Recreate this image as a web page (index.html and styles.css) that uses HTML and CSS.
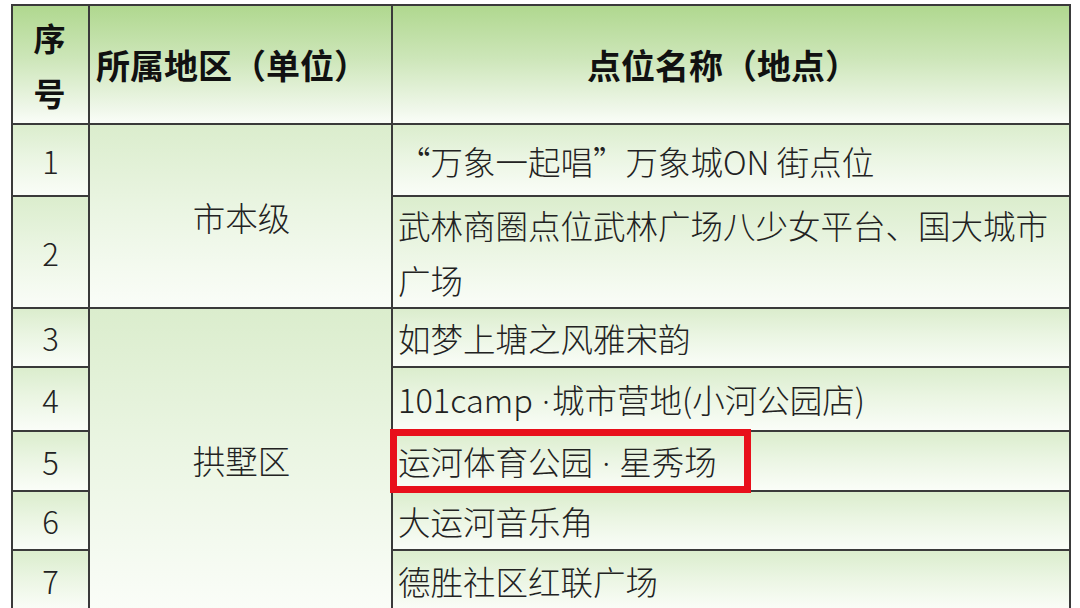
FILE: index.html
```html
<!DOCTYPE html>
<html lang="zh-CN">
<head>
<meta charset="utf-8">
<title>点位名称</title>
<link rel="stylesheet" href="styles.css">
</head>
<body>
<div class="page">
  <table class="sheet">
    <colgroup>
      <col class="c-no">
      <col class="c-area">
      <col class="c-name">
    </colgroup>
    <thead>
      <tr class="r-head">
        <th class="h-no">序号</th>
        <th class="h-area">所属地区（单位）</th>
        <th class="h-name">点位名称（地点）</th>
      </tr>
    </thead>
    <tbody>
      <tr class="r1">
        <td class="no">1</td>
        <td class="area" rowspan="2">市本级</td>
        <td class="name">“万象一起唱”万象城ON 街点位</td>
      </tr>
      <tr class="r2">
        <td class="no">2</td>
        <td class="name">武林商圈点位武林广场八少女平台、国大城市广场</td>
      </tr>
      <tr class="r3">
        <td class="no">3</td>
        <td class="area" rowspan="5">拱墅区</td>
        <td class="name">如梦上塘之风雅宋韵</td>
      </tr>
      <tr class="r4">
        <td class="no">4</td>
        <td class="name">101camp <span class="dot">·</span>城市营地(小河公园店)</td>
      </tr>
      <tr class="r5">
        <td class="no">5</td>
        <td class="name marked">运河体育公园 <span class="dot">·</span> 星秀场<span class="highlight"></span></td>
      </tr>
      <tr class="r6">
        <td class="no">6</td>
        <td class="name">大运河音乐角</td>
      </tr>
      <tr class="r7">
        <td class="no">7</td>
        <td class="name">德胜社区红联广场</td>
      </tr>
    </tbody>
  </table>
</div>
</body>
</html>
```

FILE: styles.css
```css
html, body {
  margin: 0;
  padding: 0;
  background: #ffffff;
}

.page {
  padding: 4px 11px 0 11px;
  width: 1080px;
  height: 608px;
  box-sizing: border-box;
  overflow: hidden;
}

.sheet {
  border-collapse: collapse;
  table-layout: fixed;
  width: 1058px;
  font-family: "Noto Sans CJK SC", "Noto Sans", sans-serif;
  color: #222;
}

.c-no { width: 77px; }
.c-area { width: 303px; }
.c-name { width: 678px; }

.sheet th,
.sheet td {
  border: 2px solid #3a3a3a;
  padding: 0;
  vertical-align: middle;
}

.sheet th {
  background: linear-gradient(to bottom, #b0d88f 0%, #cde6b9 45%, #f1f8ec 90%, #fafdf8 100%);
  font-weight: 700;
  font-size: 34px;
  line-height: 55px;
  color: #111;
}

.sheet .h-no {
  text-align: center;
  padding: 0 18px 0 16px;
  font-size: 32px;
  word-break: break-all;
}

.sheet .h-area {
  text-align: left;
  padding-left: 6px;
}

.sheet .h-name {
  text-align: center;
  padding-right: 16px;
}

.sheet td {
  background: linear-gradient(to bottom, #dbedcd 0%, #eaf5e2 45%, #fafdf8 100%);
  font-size: 32.5px;
  font-weight: 300;
  line-height: 55px;
}

.sheet .no {
  text-align: center;
  font-size: 31px;
}

.sheet .area {
  text-align: center;
  padding-left: 2px;
}

.sheet .name {
  text-align: left;
  padding: 0 6px 0 5px;
}

.dot {
  font-family: "Noto Sans", "DejaVu Sans", sans-serif;
  padding: 0 2px;
}

.r-head { height: 119px; }
.r1 { height: 72px; }
.r2 { height: 110px; }
.r3 { height: 59px; }
.r4 { height: 64px; }
.r5 { height: 60px; }
.r6 { height: 59px; }
.r7 { height: 60px; }

.marked {
  position: relative;
}

.highlight {
  position: absolute;
  left: -3px;
  top: -3px;
  width: 361px;
  height: 64px;
  box-sizing: border-box;
  border: 7px solid #e8101b;
  pointer-events: none;
}
```
